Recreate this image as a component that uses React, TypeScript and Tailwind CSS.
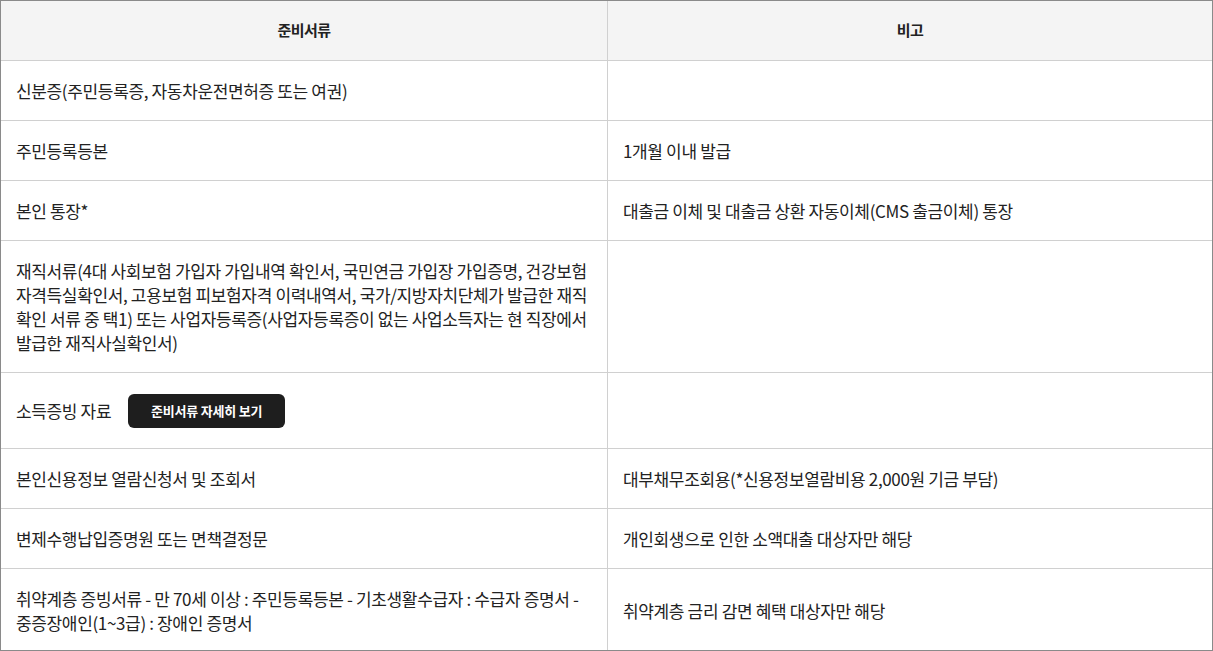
const rows: { doc: string; note: string; button?: boolean }[] = [
  { doc: '신분증(주민등록증, 자동차운전면허증 또는 여권)', note: '' },
  { doc: '주민등록등본', note: '1개월 이내 발급' },
  { doc: '본인 통장*', note: '대출금 이체 및 대출금 상환 자동이체(CMS 출금이체) 통장' },
  {
    doc: '재직서류(4대 사회보험 가입자 가입내역 확인서, 국민연금 가입장 가입증명, 건강보험 자격득실확인서, 고용보험 피보험자격 이력내역서, 국가/지방자치단체가 발급한 재직 확인 서류 중 택1) 또는 사업자등록증(사업자등록증이 없는 사업소득자는 현 직장에서 발급한 재직사실확인서)',
    note: '',
  },
  { doc: '소득증빙 자료', note: '', button: true },
  { doc: '본인신용정보 열람신청서 및 조회서', note: '대부채무조회용(*신용정보열람비용 2,000원 기금 부담)' },
  { doc: '변제수행납입증명원 또는 면책결정문', note: '개인회생으로 인한 소액대출 대상자만 해당' },
  {
    doc: '취약계층 증빙서류 - 만 70세 이상 : 주민등록등본 - 기초생활수급자 : 수급자 증명서 - 중증장애인(1~3급) : 장애인 증명서',
    note: '취약계층 금리 감면 혜택 대상자만 해당',
  },
];

export default function App() {
  return (
    <div
      className="w-[1213px] h-[651px] bg-white text-[#222] border border-[#8a8a8a] overflow-hidden"
      style={{ fontFamily: '"Noto Sans CJK KR", "Noto Sans", sans-serif' }}
    >
      {/* Header */}
      <div className="flex h-[60px] bg-[#f4f4f4] border-b border-[#d0d0d0] text-[15px] font-bold tracking-[-0.5px]">
        <div className="w-[607px] border-r border-[#d0d0d0] flex items-center justify-center">준비서류</div>
        <div className="flex-1 flex items-center justify-center">비고</div>
      </div>

      {rows.map((r, i) => (
        <div
          key={i}
          className={`flex text-[17px] leading-[24px] tracking-[-0.35px] ${i < rows.length - 1 ? 'border-b border-[#d0d0d0]' : ''}`}
        >
          <div className="w-[607px] border-r border-[#d0d0d0] px-[15px] py-[17.5px] flex items-center">
            <span>{r.doc}</span>
            {r.button && (
              <button className="ml-[17px] my-[3px] h-[34px] w-[157px] rounded-[6px] bg-[#1e1e1e] text-white text-[13px] font-bold tracking-[-0.2px]">
                준비서류 자세히 보기
              </button>
            )}
          </div>
          <div className="flex-1 px-[15px] py-[17.5px] flex items-center">{r.note}</div>
        </div>
      ))}
    </div>
  );
}
